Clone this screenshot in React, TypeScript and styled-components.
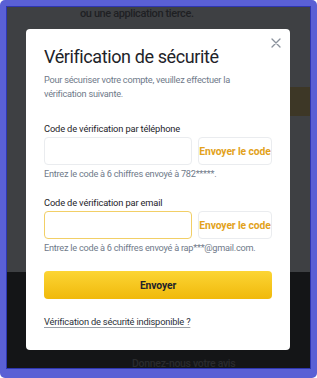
import React from "react";
import styled, { createGlobalStyle } from "styled-components";

const Global = createGlobalStyle`
  html, body { margin: 0; padding: 0; background: #ffffff; }
  body { font-family: Roboto, "Liberation Sans", Arial, sans-serif; }
  * { box-sizing: border-box; }
`;

const Frame = styled.div`
  width: 317px;
  height: 378px;
  background: #5a60d5;
  border-radius: 5px;
  padding: 6px 6px 9px 6px;
`;

const Scene = styled.div`
  position: relative;
  width: 100%;
  height: 100%;
  border: 1px solid #2e36b0;
  overflow: hidden;
  display: flex;
  flex-direction: column;
  background: #3e4043;
`;

const TopArea = styled.div`
  height: 80px;
  display: flex;
  flex-direction: column;
`;

const TopText = styled.div`
  margin: 0 0 0 73px;
  font-size: 11px;
  line-height: 13px;
  font-weight: 500;
  letter-spacing: -0.4px;
  color: #1f2023;
`;

const GhostButton = styled.div`
  height: 29px;
  margin-left: 60px;
  background: #3d3726;
`;

const Spacer = styled.div`
  flex: 1;
`;

const Footer = styled.div`
  height: 96px;
  background: #141517;
  padding: 85px 0 0 125px;
  font-size: 10.5px;
  line-height: 14px;
  font-weight: 500;
  color: #2a2b2e;
  letter-spacing: -0.3px;
`;

const Modal = styled.div`
  position: absolute;
  left: 19px;
  top: 22px;
  width: 264px;
  background: #ffffff;
  border-radius: 4px;
  padding: 17px 18px 21px 18px;
  display: flex;
  flex-direction: column;
`;

const Close = styled.button`
  position: absolute;
  top: 8px;
  right: 9px;
  width: 11px;
  height: 11px;
  padding: 0;
  border: 0;
  background: transparent;
  display: flex;
  align-items: center;
  justify-content: center;
`;

const Title = styled.h1`
  margin: 0;
  font-size: 18px;
  line-height: 22px;
  font-weight: 400;
  color: #1e2329;
  letter-spacing: -0.4px;
`;

const Subtitle = styled.p`
  margin: 5px 0 0 0;
  font-size: 9.2px;
  line-height: 14px;
  color: #707a8a;
  letter-spacing: -0.25px;
`;

const Field = styled.div<{ $first?: boolean }>`
  margin-top: ${(p) => (p.$first ? "21px" : "16px")};
  display: flex;
  flex-direction: column;
`;

const Label = styled.label`
  font-size: 9.3px;
  line-height: 14px;
  color: #1e2329;
  letter-spacing: -0.15px;
  margin-bottom: 1px;
`;

const Row = styled.div`
  display: flex;
  gap: 6px;
  height: 28px;
`;

const Input = styled.input<{ $focused?: boolean }>`
  width: 148px;
  height: 100%;
  border: 1px solid ${(p) => (p.$focused ? "#f2cf66" : "#eaecef")};
  border-radius: 4px;
  background: #ffffff;
  outline: none;
  padding: 0 8px;
  font-family: inherit;
`;

const SendCode = styled.button`
  flex: 1;
  height: 100%;
  border: 1px solid #eaecef;
  border-radius: 4px;
  background: #ffffff;
  color: #e2a21c;
  font-family: inherit;
  font-size: 10.3px;
  font-weight: 700;
  letter-spacing: -0.1px;
  padding: 0;
  white-space: nowrap;
`;

const Hint = styled.div`
  margin-top: 3px;
  font-size: 9.2px;
  line-height: 12px;
  color: #707a8a;
  letter-spacing: -0.25px;
`;

const Submit = styled.button`
  margin-top: 17px;
  height: 28px;
  border: 0;
  border-radius: 4px;
  background: linear-gradient(180deg, #fcd535 0%, #f0b90b 100%);
  color: #1e2329;
  font-family: inherit;
  font-size: 10.3px;
  font-weight: 700;
  letter-spacing: -0.1px;
`;

const Link = styled.a`
  margin-top: 16px;
  font-size: 9.3px;
  line-height: 14px;
  color: #2b3139;
  letter-spacing: -0.2px;
  text-decoration: underline;
  text-decoration-color: #9aa0a8;
  text-underline-offset: 2px;
  align-self: flex-start;
`;

export default function App() {
  return (
    <>
      <Global />
      <Frame>
        <Scene>
          <TopArea>
            <TopText>ou une application tierce.</TopText>
          </TopArea>
          <GhostButton />
          <Spacer />
          <Footer>Donnez-nous votre avis</Footer>
          <Modal>
            <Close aria-label="Fermer">
              <svg width="10" height="10" viewBox="0 0 10 10">
                <path d="M1 1L9 9M9 1L1 9" stroke="#8a919c" strokeWidth="1.3" strokeLinecap="round" />
              </svg>
            </Close>
            <Title>Vérification de sécurité</Title>
            <Subtitle>
              Pour sécuriser votre compte, veuillez effectuer la vérification suivante.
            </Subtitle>
            <Field $first>
              <Label>Code de vérification par téléphone</Label>
              <Row>
                <Input />
                <SendCode>Envoyer le code</SendCode>
              </Row>
              <Hint>Entrez le code à 6 chiffres envoyé à 782*****.</Hint>
            </Field>
            <Field>
              <Label>Code de vérification par email</Label>
              <Row>
                <Input $focused />
                <SendCode>Envoyer le code</SendCode>
              </Row>
              <Hint>Entrez le code à 6 chiffres envoyé à rap***@gmail.com.</Hint>
            </Field>
            <Submit>Envoyer</Submit>
            <Link href="#">Vérification de sécurité indisponible ?</Link>
          </Modal>
        </Scene>
      </Frame>
    </>
  );
}
